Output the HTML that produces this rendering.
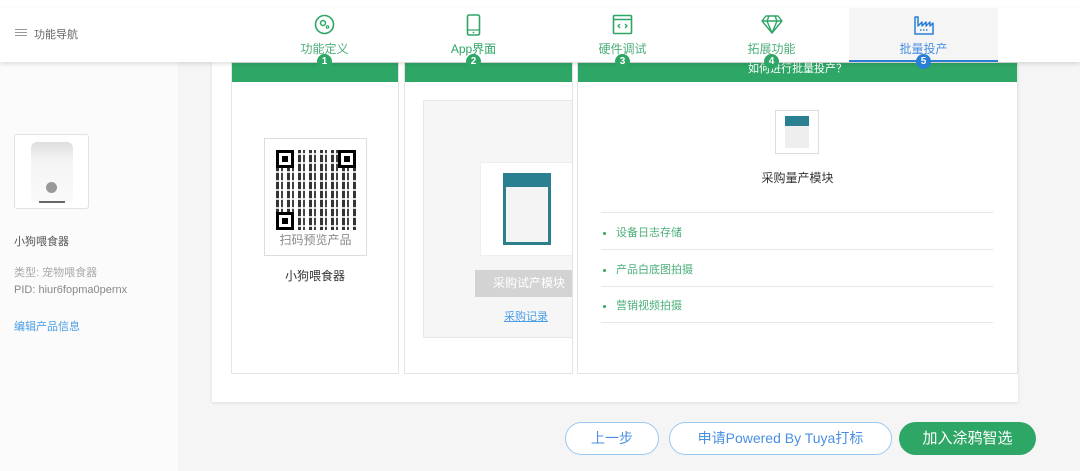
<!DOCTYPE html>
<html><head><meta charset="utf-8"><style>
*{margin:0;padding:0;box-sizing:border-box}
body{width:1080px;height:471px;overflow:hidden;background:#f5f5f5;font-family:"Liberation Sans","Noto Sans CJK SC",sans-serif;position:relative}
.a{position:absolute}
.hdr{left:0;top:8px;width:1080px;height:54px;background:#fff;box-shadow:0 2px 4px rgba(0,0,0,.12);z-index:5}
.tab{position:absolute;top:0;width:149px;height:54px;text-align:center;color:#4caf7a;font-size:12px}
.tab svg{position:absolute;left:64px;top:6px}
.tab .t{position:absolute;top:32px;width:100%}
.badge{position:absolute;top:46px;left:67px;width:15px;height:15px;border-radius:50%;background:#2ea665;color:#fff;font-size:10px;font-weight:bold;line-height:15px;text-align:center}
.col{background:#fff;border:1px solid #e4e4e4;top:62px;height:312px;overflow:hidden}
.gb{position:absolute;left:0;right:0;top:0;height:19px;background:#2ea665}
.li{position:absolute;left:601px;width:392px;height:1px;background:#e6e6e6}
.it{position:absolute;left:603px;font-size:11px;color:#4caf7a;white-space:nowrap}
.it:before{content:"";display:inline-block;width:3px;height:3px;border-radius:50%;background:#2ea665;margin-right:10px;vertical-align:middle}
.btn{position:absolute;top:422px;height:33px;border-radius:17px;font-size:14px;text-align:center;line-height:31px}
</style></head><body>
<div class="a" style="left:0;top:0;width:1080px;height:8px;background:#fff"></div>
<div class="a" style="left:0;top:62px;width:178px;height:409px;background:#fbfbfb"></div>
<div class="a hdr">
 <div class="a" style="left:15px;top:21px;width:12px;height:1px;background:#999;box-shadow:0 3px 0 #999,0 6px 0 #999"></div>
 <div class="a" style="left:34px;top:18px;font-size:11px;color:#666">功能导航</div>
 <div class="tab" style="left:250px"><svg width="21" height="21" viewBox="0 0 21 21"><circle cx="10.5" cy="10.5" r="9" fill="none" stroke="#2ea665" stroke-width="1.6"/><circle cx="9" cy="9" r="2.5" fill="none" stroke="#2ea665" stroke-width="1.5"/><circle cx="13.5" cy="13" r="1.2" fill="none" stroke="#2ea665" stroke-width="1.2"/></svg><div class="t">功能定义</div><div class="badge">1</div></div>
 <div class="tab" style="left:399px"><svg width="21" height="22" viewBox="0 0 21 22"><rect x="4.5" y="1" width="12" height="20" rx="1.5" fill="none" stroke="#2ea665" stroke-width="1.6"/><line x1="4.5" y1="16" x2="16.5" y2="16" stroke="#2ea665" stroke-width="1.2"/><circle cx="10.5" cy="18.5" r=".9" fill="#2ea665"/></svg><div class="t" style="color:#2ea665">App界面</div><div class="badge">2</div></div>
 <div class="tab" style="left:548px"><svg width="21" height="21" viewBox="0 0 21 21"><rect x="1.5" y="1.5" width="18" height="18" rx="1" fill="none" stroke="#2ea665" stroke-width="1.6"/><line x1="1.5" y1="5.5" x2="19.5" y2="5.5" stroke="#2ea665" stroke-width="1.4"/><path d="M8 10l-2 2 2 2M13 10l2 2-2 2" fill="none" stroke="#2ea665" stroke-width="1.3"/></svg><div class="t">硬件调试</div><div class="badge">3</div></div>
 <div class="tab" style="left:697px"><svg width="22" height="20" viewBox="0 0 22 20"><path d="M5 2h12l4 5-10 12L1 7z M1 7h20 M8 2l-2 5 5 12 5-12-2-5" fill="none" stroke="#2ea665" stroke-width="1.4" stroke-linejoin="round"/></svg><div class="t">拓展功能</div><div class="badge">4</div></div>
 <div class="tab" style="left:849px;background:#f5f5f5;color:#4a90e2;border-bottom:2px solid #2a7fd4"><svg width="22" height="21" viewBox="0 0 22 21"><path d="M2 20V3h3v9l4-4v4l4-4v4l4-4v4l3-3v11z" fill="none" stroke="#2a7fd4" stroke-width="1.5" stroke-linejoin="round"/><path d="M7 16h1.5M10 16h1.5M13 16h1.5" stroke="#2a7fd4" stroke-width="1.5"/></svg><div class="t">批量投产</div><div class="badge" style="background:#2a7fd4;left:67px">5</div></div>
</div>
<div class="a" style="left:14px;top:134px;width:75px;height:75px;border:1px solid #e2e2e2;border-radius:3px;background:#fff">
 <div class="a" style="left:16px;top:7px;width:42px;height:60px;background:linear-gradient(#ddd,#f4f4f4 30%,#fafafa);border-radius:6px 6px 2px 2px"></div>
 <div class="a" style="left:31px;top:47px;width:11px;height:11px;border-radius:50%;background:#999"></div>
 <div class="a" style="left:24px;top:66px;width:26px;height:2px;background:#666"></div>
</div>
<div class="a" style="left:14px;top:233px;font-size:11px;color:#555">小狗喂食器</div>
<div class="a" style="left:14px;top:264px;font-size:11px;color:#aaa">类型: 宠物喂食器</div>
<div class="a" style="left:14px;top:284px;font-size:11px;color:#888">PID: hiur6fopma0pernx</div>
<div class="a" style="left:14px;top:318px;font-size:11px;color:#4a9ee8">编辑产品信息</div>
<div class="a" style="left:212px;top:62px;width:806px;height:340px;background:#fff;box-shadow:0 1px 3px rgba(0,0,0,.1)"></div>
<div class="a col" style="left:231px;width:168px"><div class="gb"></div>
 <div class="a" style="left:32px;top:75px;width:103px;height:118px;border:1px solid #ddd"></div>
 <div class="a" style="left:44px;top:87px;width:80px;height:80px;background:repeating-linear-gradient(90deg,#111 0 3px,#fff 3px 5px,#222 5px 7px,#fff 7px 11px),#000;opacity:.85"></div>
 <div class="a" style="left:44px;top:87px;width:80px;height:80px;background:repeating-linear-gradient(0deg,transparent 0 3px,rgba(255,255,255,.8) 3px 5px,transparent 5px 9px)"></div>
 <div class="a" style="left:44px;top:87px;width:18px;height:18px;border:3px solid #000;background:#fff;box-shadow:inset 0 0 0 3px #fff,inset 0 0 0 9px #000"></div>
 <div class="a" style="left:106px;top:87px;width:18px;height:18px;border:3px solid #000;background:#fff;box-shadow:inset 0 0 0 3px #fff,inset 0 0 0 9px #000"></div>
 <div class="a" style="left:44px;top:149px;width:18px;height:18px;border:3px solid #000;background:#fff;box-shadow:inset 0 0 0 3px #fff,inset 0 0 0 9px #000"></div>
 <div class="a" style="left:33px;top:168px;width:101px;background:#fff;text-align:center;font-size:12px;color:#888">扫码预览产品</div>
 <div class="a" style="left:0;top:204px;width:166px;text-align:center;font-size:12px;color:#333">小狗喂食器</div>
</div>
<div class="a col" style="left:404px;width:169px"><div class="gb"></div>
 <div class="a" style="left:18px;top:37px;width:160px;height:238px;background:#f6f6f6;border:1px solid #e8e8e8"></div>
 <div class="a" style="left:75px;top:99px;width:100px;height:94px;background:#fff;border:1px solid #eee"></div>
 <div class="a" style="left:98px;top:110px;width:48px;height:72px;background:#f4f4f4;border:3px solid #2d7f8c;border-top:14px solid #2a8090"></div>
 <div class="a" style="left:70px;top:207px;width:110px;height:27px;background:#d3d3d3;color:#fff;font-size:12px;line-height:27px;padding-left:18px">采购试产模块</div>
 <div class="a" style="left:99px;top:245px;font-size:11px;color:#4a9ee8;text-decoration:underline">采购记录</div>
</div>
<div class="a col" style="left:577px;width:441px"><div class="gb"></div>
 <div class="a" style="left:0;top:-3px;width:100%;text-align:center;color:#fff;font-size:11px">如何进行批量投产？</div>
 <div class="a" style="left:197px;top:47px;width:44px;height:44px;border:1px solid #ddd;background:#fff"></div>
 <div class="a" style="left:207px;top:53px;width:24px;height:32px;background:#eee;border-top:10px solid #2a8090"></div>
 <div class="a" style="left:0;top:106px;width:100%;text-align:center;font-size:12px;color:#333">采购量产模块</div>
</div>
<div style="position:absolute;left:0;top:0;width:1080px;z-index:4">
 <div class="li" style="top:212px"></div><div class="li" style="top:249px"></div><div class="li" style="top:286px"></div><div class="li" style="top:322px"></div>
 <div class="it" style="top:224px">设备日志存储</div><div class="it" style="top:261px">产品白底图拍摄</div><div class="it" style="top:297px">营销视频拍摄</div>
</div>
<div class="btn" style="left:565px;width:94px;background:#fff;border:1px solid #9cc8f2;color:#4a90e2">上一步</div>
<div class="btn" style="left:669px;width:223px;background:#fff;border:1px solid #9cc8f2;color:#4a90e2">申请Powered By Tuya打标</div>
<div class="btn" style="left:899px;width:137px;background:#2ea665;color:#fff;line-height:33px;font-size:15px">加入涂鸦智选</div>
</body></html>
